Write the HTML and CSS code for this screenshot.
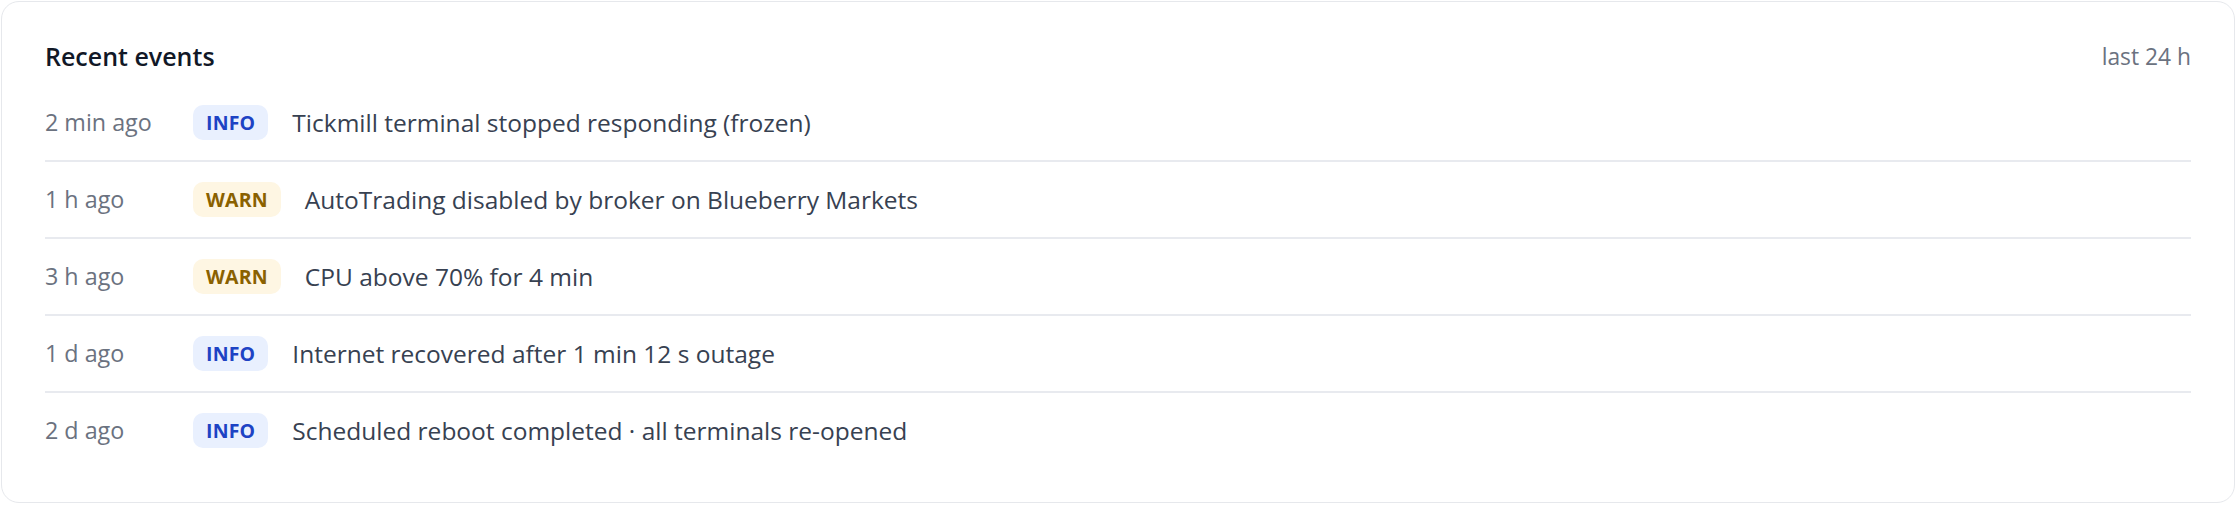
FILE: index.html
```html
<!DOCTYPE html>
<html lang="en">
<head>
<meta charset="utf-8">
<title>Recent events</title>
<link rel="stylesheet" href="styles.css">
</head>
<body>
  <section class="card">
    <header class="card-head">
      <h2 class="card-title">Recent events</h2>
      <span class="card-meta">last 24 h</span>
    </header>
    <ul class="events">
      <li class="event">
        <span class="event-time">2 min ago</span>
        <span class="badge badge-info">INFO</span>
        <span class="event-text">Tickmill terminal stopped responding (frozen)</span>
      </li>
      <li class="event">
        <span class="event-time">1 h ago</span>
        <span class="badge badge-warn">WARN</span>
        <span class="event-text">AutoTrading disabled by broker on Blueberry Markets</span>
      </li>
      <li class="event">
        <span class="event-time">3 h ago</span>
        <span class="badge badge-warn">WARN</span>
        <span class="event-text">CPU above 70% for 4 min</span>
      </li>
      <li class="event">
        <span class="event-time">1 d ago</span>
        <span class="badge badge-info">INFO</span>
        <span class="event-text">Internet recovered after 1 min 12 s outage</span>
      </li>
      <li class="event">
        <span class="event-time">2 d ago</span>
        <span class="badge badge-info">INFO</span>
        <span class="event-text">Scheduled reboot completed · all terminals re-opened</span>
      </li>
    </ul>
  </section>
</body>
</html>
```
FILE: styles.css
```css
* { box-sizing: border-box; }

html, body {
  margin: 0;
  background: #ffffff;
}

body {
  padding: 1px;
  font-family: "Open Sans", "Liberation Sans", sans-serif;
  color: #374151;
}

.card {
  border: 1px solid #e6e8ec;
  border-radius: 18px;
  background: #ffffff;
  padding: 36px 43px 34px 43px;
}

.card-head {
  display: flex;
  align-items: center;
  justify-content: space-between;
  height: 36px;
  margin-bottom: 11px;
}

.card-title {
  margin: 0;
  font-size: 25px;
  font-weight: 600;
  color: #111827;
  line-height: 36px;
}

.card-meta {
  font-size: 22.8px;
  color: #6b7280;
}

.events {
  list-style: none;
  margin: 0;
  padding: 0;
}

.event {
  display: flex;
  align-items: center;
  gap: 24px;
  padding: 20px 0;
  border-bottom: 2px solid #e8eaef;
  line-height: 35px;
}

.event:last-child {
  border-bottom: none;
}

.event-time {
  flex: 0 0 124px;
  font-size: 23.3px;
  color: #6b7280;
}

.badge {
  display: inline-flex;
  align-items: center;
  height: 35px;
  padding: 0 13px;
  border-radius: 10px;
  font-size: 19.5px;
  font-weight: 700;
  letter-spacing: 0.2px;
}

.badge-info {
  background: #e9f0fe;
  color: #1d43c4;
}

.badge-warn {
  background: #fef6e3;
  color: #8a6100;
}

.event-text {
  font-size: 24.5px;
  color: #374151;
}
```
